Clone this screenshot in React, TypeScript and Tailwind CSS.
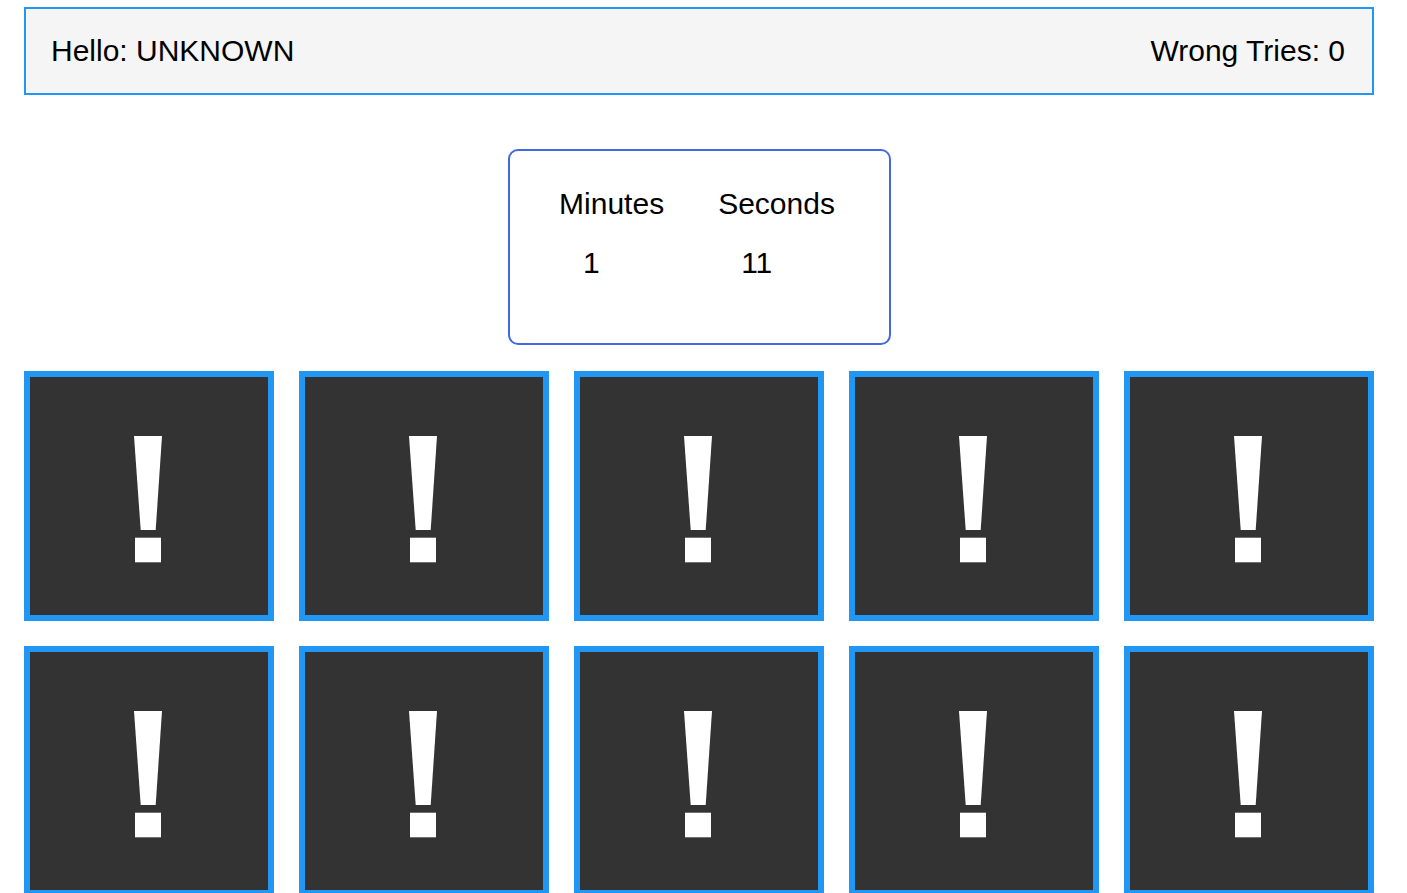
import React from 'react';

function Bang() {
  return (
    <svg width="28" height="127" viewBox="0 0 28 127" className="mt-[6px] mr-[2px]">
      <polygon points="0,0 28,0 21.7,94 6.7,94" fill="#ffffff" />
      <rect x="1" y="101.7" width="26" height="24.6" fill="#ffffff" />
    </svg>
  );
}

function Card() {
  return (
    <div className="w-[250px] h-[250px] border-[6px] border-[#2196f3] bg-[#333333] flex items-center justify-center">
      <Bang />
    </div>
  );
}

export default function App() {
  const cards = Array.from({ length: 10 });

  return (
    <div className="min-h-screen bg-white pl-[24px] pr-[33px] pt-[7px] text-black font-['Liberation_Sans',Arial,sans-serif]">
      {/* Top bar */}
      <div className="h-[88px] border-2 border-[#2196f3] bg-[#f5f5f5] flex items-center justify-between pl-[25px] pr-[27px] text-[30px] leading-[34px]">
        <span>Hello: UNKNOWN</span>
        <span>Wrong Tries: 0</span>
      </div>

      {/* Timer */}
      <div className="flex justify-center mt-[54px]">
        <div className="w-[383px] h-[196px] border-2 border-[#4169e1] rounded-[10px] flex justify-center gap-[54px] pt-[36px] pr-[4px] text-[30px] leading-[34px]">
          <div className="flex flex-col gap-[25px]">
            <span>Minutes</span>
            <span className="pl-[24px]">1</span>
          </div>
          <div className="flex flex-col gap-[25px]">
            <span>Seconds</span>
            <span className="pl-[23px]">11</span>
          </div>
        </div>
      </div>

      {/* Cards */}
      <div className="grid grid-cols-5 gap-[25px] mt-[26px] w-[1350px]">
        {cards.map((_, i) => (
          <Card key={i} />
        ))}
      </div>
    </div>
  );
}
